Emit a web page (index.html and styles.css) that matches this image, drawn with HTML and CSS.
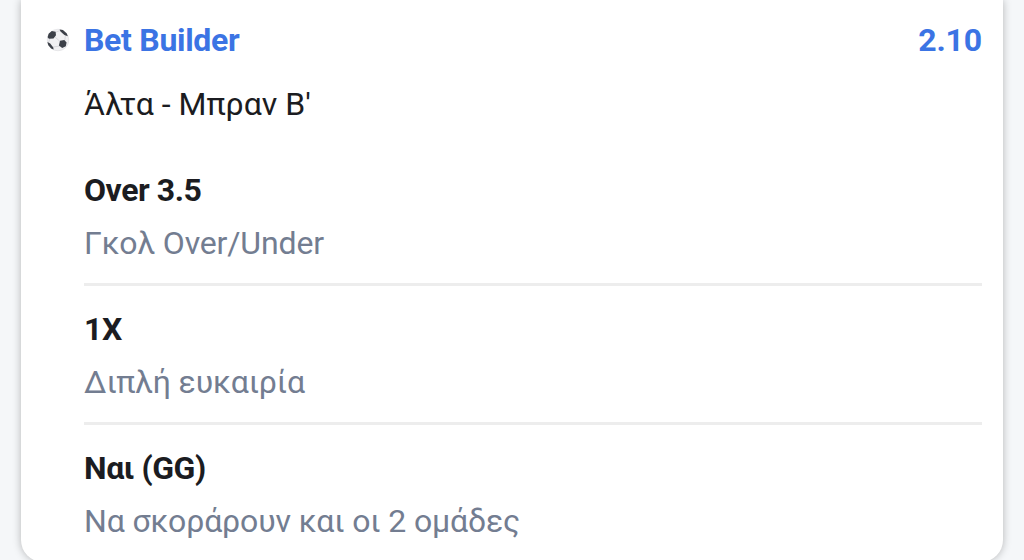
FILE: index.html
```html
<!DOCTYPE html>
<html lang="el">
<head>
<meta charset="utf-8">
<title>Bet Builder</title>
<link rel="stylesheet" href="styles.css">
</head>
<body>
<main class="card">
  <header class="head">
    <svg class="ball" viewBox="0 0 24 24" aria-hidden="true">
      <circle cx="12" cy="12" r="10.8" fill="#f0f0f2" stroke="#d8d8dc" stroke-width=".5"/>
      <path fill="none" stroke="#cfcfd4" stroke-width=".7" d="M8.5 8.5l5.5 5M9 4.5l5-2M19.5 6.5l-.8 7M14 18l-7 1M4 10l-1.5 5"/>
      <path fill="#3c4048" d="M2.6 5.7L5.8 3l3.8.8.4 3.4-2.5 3.2-4.6.4-1.3-1.6zM14 12.8l4.3-.7 2.3 2.4-.8 3.7-3.6 1.8-3.3-2.6zM13.6 1.4l3.3.5 3.9 3.6 1 2.8-3.4-1.2-3.9-3.6zM1.4 14.1l2.8 1.5 3.1 3.9.3 2.1-2.5-1.1-2.8-3.2z"/>
    </svg>
    <h1 class="title">Bet Builder</h1>
    <span class="odds">2.10</span>
  </header>
  <section class="body">
    <p class="match">Άλτα - Μπραν Β'</p>
    <div class="leg"><h2 class="pick">Over 3.5</h2><p class="market">Γκολ Over/Under</p></div>
    <div class="leg"><h2 class="pick">1X</h2><p class="market">Διπλή ευκαιρία</p></div>
    <div class="leg"><h2 class="pick">Ναι (GG)</h2><p class="market">Να σκοράρουν και οι 2 ομάδες</p></div>
  </section>
</main>
</body>
</html>
```
FILE: styles.css
```css
* { box-sizing: border-box; }
body { margin: 0; height: 560px; overflow: hidden; background: #f5f7f9; font-family: Roboto, sans-serif; font-size: 32px; line-height: 40px; color: #1b1c21; }
h1, h2, p { margin: 0; font-size: inherit; }
.card { height: 562px; margin: 0 21px; padding: 20px 21px 0 25px; background: #fff; border-radius: 0 0 22px 22px; box-shadow: 0 0 8px rgba(0, 0, 0, .27); }
.head { display: flex; align-items: center; color: #3b74e4; font-weight: 700; }
.ball { width: 24px; height: 24px; margin: -1px 14px 0 0; }
.title { font-weight: 700; letter-spacing: -.3px; }
.odds { margin-left: auto; letter-spacing: -.15px; }
.body { margin-left: 38px; }
.match { margin-top: 24px; }
.leg { height: 139px; padding-top: 23px; border-bottom: 3px solid #ededed; }
.match + .leg { margin-top: 23px; }
.leg:last-child { border-bottom: 0; }
.pick { font-weight: 700; letter-spacing: -.45px; }
.market { margin-top: 13px; color: #737d91; letter-spacing: -.15px; }
```
